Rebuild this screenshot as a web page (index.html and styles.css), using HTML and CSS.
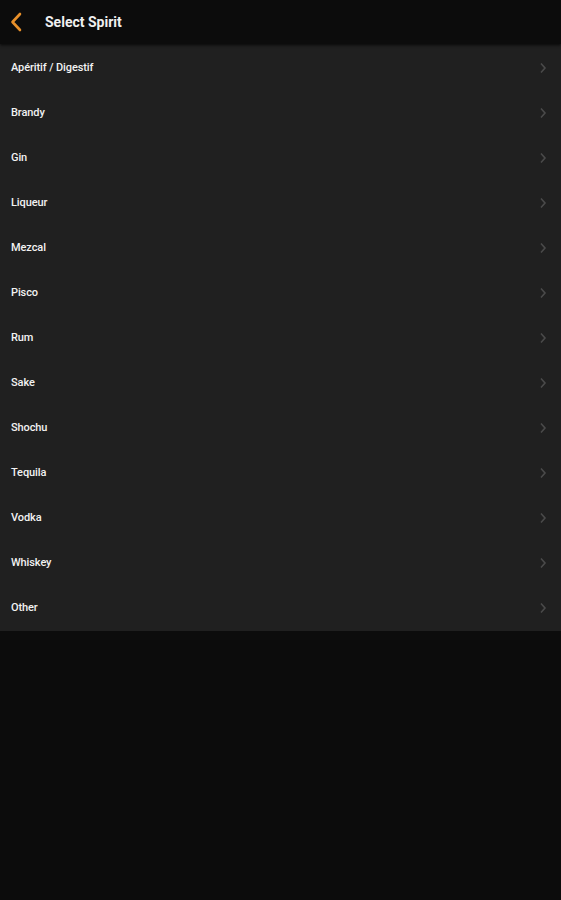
FILE: index.html
```html
<!DOCTYPE html>
<html>
<head>
<meta charset="utf-8">
<link rel="stylesheet" href="styles.css">
</head>
<body>
<header class="topbar">
  <svg class="back" width="14" height="20" viewBox="0 0 14 20"><path d="M11 2 L3.5 10 L11 18" fill="none" stroke="#e8902a" stroke-width="2.6" stroke-linecap="round" stroke-linejoin="round"/></svg>
  <h1 class="title">Select Spirit</h1>
</header>
<ul class="list">
  <li class="row"><span>Apéritif / Digestif</span><svg class="chev" width="8" height="12" viewBox="0 0 8 12"><path d="M2 1.5 L6 6 L2 10.5" fill="none" stroke="#4a4a4a" stroke-width="1.6"/></svg></li>
  <li class="row"><span>Brandy</span><svg class="chev" width="8" height="12" viewBox="0 0 8 12"><path d="M2 1.5 L6 6 L2 10.5" fill="none" stroke="#4a4a4a" stroke-width="1.6"/></svg></li>
  <li class="row"><span>Gin</span><svg class="chev" width="8" height="12" viewBox="0 0 8 12"><path d="M2 1.5 L6 6 L2 10.5" fill="none" stroke="#4a4a4a" stroke-width="1.6"/></svg></li>
  <li class="row"><span>Liqueur</span><svg class="chev" width="8" height="12" viewBox="0 0 8 12"><path d="M2 1.5 L6 6 L2 10.5" fill="none" stroke="#4a4a4a" stroke-width="1.6"/></svg></li>
  <li class="row"><span>Mezcal</span><svg class="chev" width="8" height="12" viewBox="0 0 8 12"><path d="M2 1.5 L6 6 L2 10.5" fill="none" stroke="#4a4a4a" stroke-width="1.6"/></svg></li>
  <li class="row"><span>Pisco</span><svg class="chev" width="8" height="12" viewBox="0 0 8 12"><path d="M2 1.5 L6 6 L2 10.5" fill="none" stroke="#4a4a4a" stroke-width="1.6"/></svg></li>
  <li class="row"><span>Rum</span><svg class="chev" width="8" height="12" viewBox="0 0 8 12"><path d="M2 1.5 L6 6 L2 10.5" fill="none" stroke="#4a4a4a" stroke-width="1.6"/></svg></li>
  <li class="row"><span>Sake</span><svg class="chev" width="8" height="12" viewBox="0 0 8 12"><path d="M2 1.5 L6 6 L2 10.5" fill="none" stroke="#4a4a4a" stroke-width="1.6"/></svg></li>
  <li class="row"><span>Shochu</span><svg class="chev" width="8" height="12" viewBox="0 0 8 12"><path d="M2 1.5 L6 6 L2 10.5" fill="none" stroke="#4a4a4a" stroke-width="1.6"/></svg></li>
  <li class="row"><span>Tequila</span><svg class="chev" width="8" height="12" viewBox="0 0 8 12"><path d="M2 1.5 L6 6 L2 10.5" fill="none" stroke="#4a4a4a" stroke-width="1.6"/></svg></li>
  <li class="row"><span>Vodka</span><svg class="chev" width="8" height="12" viewBox="0 0 8 12"><path d="M2 1.5 L6 6 L2 10.5" fill="none" stroke="#4a4a4a" stroke-width="1.6"/></svg></li>
  <li class="row"><span>Whiskey</span><svg class="chev" width="8" height="12" viewBox="0 0 8 12"><path d="M2 1.5 L6 6 L2 10.5" fill="none" stroke="#4a4a4a" stroke-width="1.6"/></svg></li>
  <li class="row"><span>Other</span><svg class="chev" width="8" height="12" viewBox="0 0 8 12"><path d="M2 1.5 L6 6 L2 10.5" fill="none" stroke="#4a4a4a" stroke-width="1.6"/></svg></li>
</ul>
</body>
</html>
```
FILE: styles.css
```css
html, body {
  margin: 0;
  padding: 0;
  background: #0c0c0c;
  font-family: Roboto, "Liberation Sans", Arial, sans-serif;
  color: #ffffff;
}
.topbar {
  height: 44px;
  display: flex;
  align-items: center;
  background: #0c0c0c;
  box-shadow: 0 1px 3px rgba(0,0,0,0.8);
  position: relative;
  z-index: 1;
}
.back {
  margin-left: 9px;
}
.title {
  margin: 0 0 0 22px;
  font-size: 14px;
  font-weight: 700;
  color: #f0f0f0;
}
.list {
  list-style: none;
  margin: 0;
  padding: 1px 0 1px 0;
  background: #202020;
}
.row {
  height: 45px;
  display: flex;
  align-items: center;
  justify-content: space-between;
  padding: 0 14px 0 11px;
  font-size: 11px;
  font-weight: 500;
  letter-spacing: -0.1px;
  color: #f2f2f2;
}
```
